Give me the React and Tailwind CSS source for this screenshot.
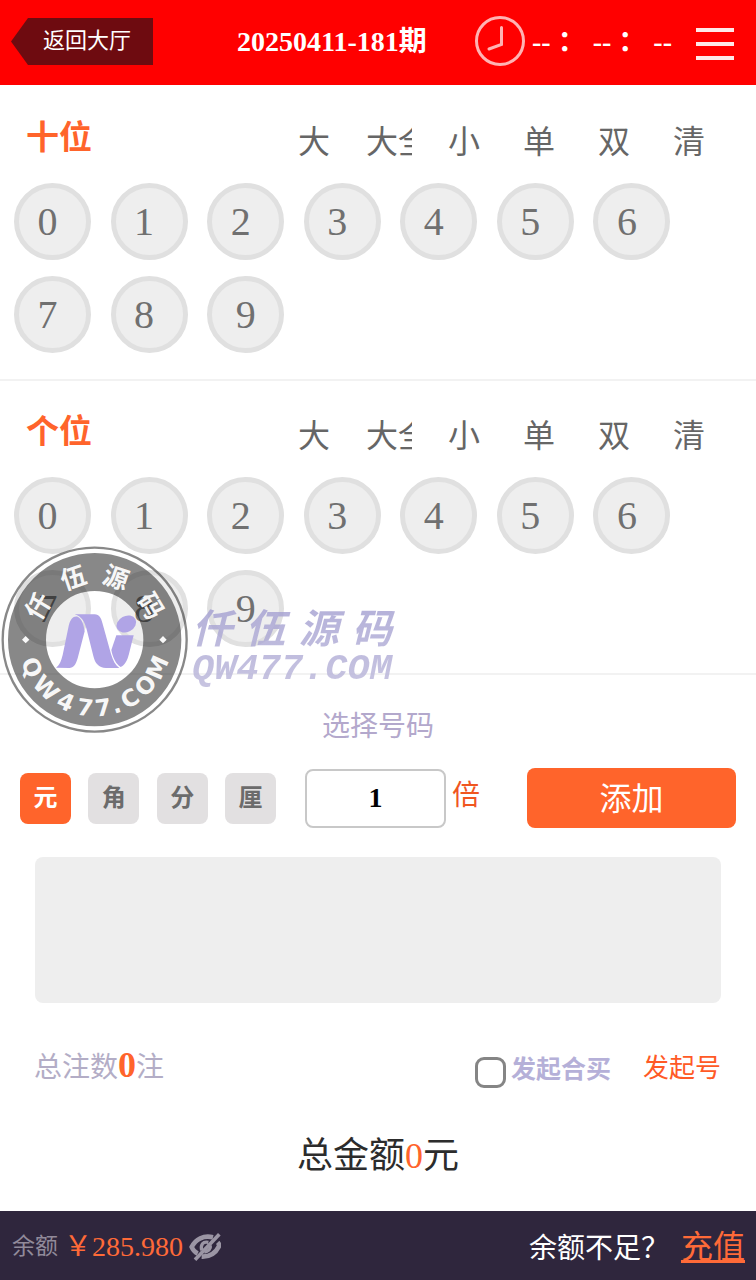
import { useState } from 'react';

const pageClass = 'relative min-h-screen flex flex-col bg-white font-["Liberation_Serif","Noto_Sans_CJK_SC",serif]';
const ballClass = 'w-[77px] h-[77px] rounded-full border-[5px] border-[#e0e0e0] bg-[#eeeeee] text-[40px] leading-[40px] text-[#707070]';
const unitClass = 'w-[51px] h-[51px] rounded-lg text-[24px] leading-[24px] font-bold';

const positions = ['十位', '个位'];
const filters   = ['大', '大全', '小', '单', '双', '清'];
const digits    = [0, 1, 2, 3, 4, 5, 6, 7, 8, 9];
const units     = ['元', '角', '分', '厘'];

const sealTop = [['仟', -59], ['伍', -19], ['源', 19], ['码', 59]];
const sealBottom = [['Q', 66], ['W', 45], ['4', 25], ['7', 8], ['7', -7], ['.', -18], ['C', -31], ['O', -48], ['M', -66]];

function Header() {
  return (
    <header className="flex items-center h-[85px] bg-[#ff0000] text-white pl-[11px] pr-[22px] pb-[2px]">
      <a href="#hall" className="w-[142px] h-[47px] pl-8 text-[22px] leading-[46px] bg-[#6e0b10] [clip-path:polygon(17px_0,100%_0,100%_100%,17px_100%,0_50%)]">返回大厅</a>
      <h1 className="ml-[84px] text-[28px] leading-[40px] font-bold">20250411-181期</h1>
      <div className="ml-auto flex items-center">
        <svg className="w-[52px] h-[52px] mb-[2px]" viewBox="0 0 52 52" fill="none" stroke="#ffb3b3" strokeLinecap="round">
          <circle cx="26" cy="26" r="23.5" strokeWidth="3" />
          <path d="M27.5 12.5V29.5L15 34" strokeWidth="3" />
        </svg>
        <time className="ml-[6px] text-[28px] leading-[40px] font-bold whitespace-nowrap">-- ： -- ： --</time>
      </div>
      <button aria-label="菜单" className="ml-6 mt-1 w-[38px] flex flex-col gap-[10px]">
        <span className="h-1 bg-[#ffe8e8]" />
        <span className="h-1 bg-[#ffe8e8]" />
        <span className="h-1 bg-[#ffe8e8]" />
      </button>
    </header>
  );
}

function BetRow({ title, picked, onPick }) {
  return (
    <section className="border-b-2 border-[#f2f2f2] pb-[26px]">
      <div className="flex items-start justify-between h-24 pt-[29px] pl-[26px] pr-11">
        <h2 className="text-[33px] leading-[44px] font-bold text-[#ff642b]">{title}</h2>
        <div className="flex gap-[29px] pt-1">
          {filters.map(f => (
            <button key={f} className="w-[46px] overflow-hidden whitespace-nowrap text-[32px] leading-[44px] text-[#666]">{f}</button>
          ))}
        </div>
      </div>
      <div className="grid grid-cols-7 gap-y-4 pl-[14px] pr-[66px]">
        {digits.map(d => (
          <button
            key={d}
            aria-pressed={picked.includes(d)}
            className={`${ballClass} ${d === 9 ? '' : 'pr-[10px]'}`}
            onClick={() => onPick(d)}
          >
            {d}
          </button>
        ))}
      </div>
    </section>
  );
}

function Seal() {
  return (
    <svg className="w-[200px] h-[200px]" viewBox="0 0 600 600">
      <g fill="none" stroke="#111" strokeOpacity="0.5">
        <circle cx="284" cy="299" r="276" strokeWidth="7" />
        <circle cx="284" cy="299" r="203" strokeWidth="114" />
      </g>
      <g fill="#fff" fillOpacity="0.95" textAnchor="middle" fontWeight="700">
        {sealTop.map(([c, a]) => (
          <text key={c} x="284" y="130" fontSize="76" fontFamily="Noto Sans CJK SC, sans-serif" transform={`rotate(${a} 284 299)`}>{c}</text>
        ))}
        {sealBottom.map(([c, a]) => (
          <text key={a} x="284" y="529" fontSize="70" fontFamily="DejaVu Sans, sans-serif" transform={`rotate(${a} 284 299)`}>{c}</text>
        ))}
        <path d="M77 288L88 299L77 310L66 299ZM489 288L500 299L489 310L478 299Z" />
      </g>
      <g fill="#b0a4e6">
        <path d="M168 383C180 375 184 360 188 345L206 258C211 236 221 227 233 230C246 236 251 254 254 274L233 355C227 375 221 384 208 384Z" />
        <path d="M224 223H284C298 224 303 234 307 248L333 342C339 362 346 376 358 384H318C296 383 285 370 280 348L261 272C255 246 246 230 224 223Z" />
        <path d="M349 286H401L386 345C381 364 374 375 362 381C347 372 338 352 334 330Z" />
        <ellipse cx="379" cy="252" rx="31" ry="24" transform="rotate(-28 379 252)" />
      </g>
    </svg>
  );
}

function Watermark() {
  return (
    <div className="absolute left-0 top-[540px] flex items-start pointer-events-none">
      <Seal />
      <div className="-ml-2 pt-[60px] pb-2 w-[212px] font-bold italic text-transparent bg-clip-text bg-linear-to-b from-[#8f8ac8]/80 to-[#bcb8da]/80">
        <div className="flex justify-between pr-3 text-[40px] leading-[52px] font-['Noto_Sans_CJK_SC',sans-serif]">
          <span>仟</span>
          <span>伍</span>
          <span>源</span>
          <span>码</span>
        </div>
        <div className="text-[37px] leading-[34px] font-['Liberation_Mono',monospace]">QW477.COM</div>
      </div>
    </div>
  );
}

export default function App() {
  const [picked, setPicked] = useState({});
  const [unit,   setUnit]   = useState('元');
  const [times,  setTimes]  = useState('1');

  function handlePick(title, d) {
    setPicked(prev => {
      const list = prev[title] || [];
      return { ...prev, [title]: list.includes(d) ? list.filter(x => x !== d) : [...list, d] };
    });
  }

  return (
    <div className={pageClass}>
      <Header />

      <main className="pt-[2px]">
        {positions.map(p => (
          <BetRow key={p} title={p} picked={picked[p] || []} onPick={d => handlePick(p, d)} />
        ))}

        <p className="pt-8 text-center text-[28px] leading-[40px] text-[#b3a8cc]">选择号码</p>

        <div className="flex items-center mt-[21px] px-5">
          <div className="flex justify-between w-64">
            {units.map(u => (
              <button
                key={u}
                className={`${unitClass} ${u === unit ? 'bg-[#ff642b] text-white' : 'bg-[#e2e0e1] text-[#6b6b6b]'}`}
                onClick={() => setUnit(u)}
              >
                {u}
              </button>
            ))}
          </div>
          <input
            id="times"
            type="text"
            className="ml-[29px] w-[141px] h-[59px] rounded-lg border-2 border-[#c8c8c8] text-center text-[28px] font-bold text-black"
            value={times}
            onChange={e => setTimes(e.target.value)}
          />
          <label htmlFor="times" className="ml-[6px] pb-1 text-[28px] leading-[40px] text-[#f0561f]">倍</label>
          <button className="ml-[47px] flex-1 h-[60px] pt-[2px] rounded-lg bg-[#ff642b] text-[32px] leading-[40px] text-white">添加</button>
        </div>

        <textarea aria-label="投注内容" readOnly className="block mt-[29px] mx-[35px] w-[calc(100%-70px)] h-[146px] rounded-lg bg-[#eeeeee] resize-none" />

        <div className="flex items-center mt-10 pl-[34px] pr-[35px]">
          <p className="pb-1 text-[28px] leading-[44px] text-[#b3adc6]">
            总注数<b className="text-[36px] text-[#ff642b]">0</b>注
          </p>
          <input id="group" type="checkbox" className="ml-auto mt-2 appearance-none w-[31px] h-[31px] rounded-[9px] border-[3px] border-[#858585] bg-white" />
          <label htmlFor="group" className="ml-[5px] pt-[2px] text-[25px] leading-[44px] font-bold text-[#b5b0d8]">发起合买</label>
          <a href="#group" className="ml-8 text-[26px] leading-[44px] text-[#ff5a26]">发起号</a>
        </div>

        <p className="mt-10 text-center text-[36px] leading-[44px] text-[#2c2c2c]">
          总金额<span className="text-[#ff642b]">0</span>元
        </p>
      </main>

      <footer className="flex items-center h-[69px] mt-auto pt-[2px] pl-3 pr-[11px] bg-[#2f263d]">
        <span className="text-[23px] leading-[40px] text-[#918a9a]">余额</span>
        <span className="ml-[6px] text-[28px] leading-[40px] text-[#ff6a38]">￥285.980</span>
        <button aria-label="隐藏余额" className="ml-[6px]">
          <svg className="w-8 h-7" viewBox="0 0 96 84" fill="none" stroke="#9b95a4">
            <path d="M72 13C44 6 20 18 8 42C12 52 18 58 26 62M86 28C90 32 91 36 90 40C80 60 62 72 38 71" strokeWidth="14" />
            <path d="M91 4L18 80" strokeWidth="11" />
            <path d="M58 28C42 24 34 36 38 52M64 38C66 48 58 56 46 57" strokeWidth="10" />
          </svg>
        </button>
        <span className="ml-auto pt-1 text-[28px] leading-[40px] text-white">余额不足？</span>
        <a href="#recharge" className="ml-3 text-[32px] leading-[40px] text-[#ff6a38] underline">充值</a>
      </footer>

      <Watermark />
    </div>
  );
}
